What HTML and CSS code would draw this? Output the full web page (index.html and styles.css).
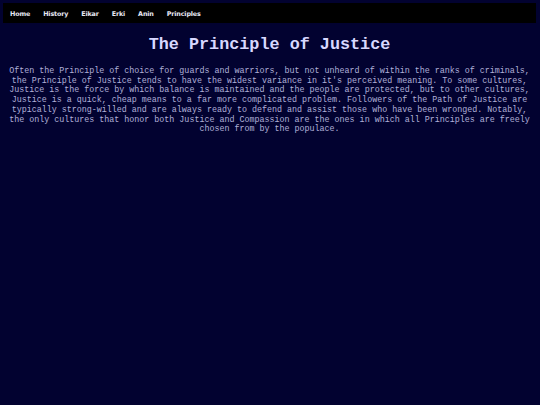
FILE: index.html
```html
<!DOCTYPE html>
<html>
<head>
<meta charset="utf-8">
<link rel="stylesheet" href="styles.css">
</head>
<body>
<nav class="nav">
  <a class="nav-link" href="#">Home</a>
  <a class="nav-link" href="#">History</a>
  <a class="nav-link" href="#">Eikar</a>
  <a class="nav-link" href="#">Erki</a>
  <a class="nav-link" href="#">Anin</a>
  <a class="nav-link" href="#">Principles</a>
</nav>
<main class="content">
  <h1 class="title">The Principle of Justice</h1>
  <p class="text">Often the Principle of choice for guards and warriors, but not unheard of within the ranks of criminals, the Principle of Justice tends to have the widest variance in it's perceived meaning. To some cultures, Justice is the force by which balance is maintained and the people are protected, but to other cultures, Justice is a quick, cheap means to a far more complicated problem. Followers of the Path of Justice are typically strong-willed and are always ready to defend and assist those who have been wronged. Notably, the only cultures that honor both Justice and Compassion are the ones in which all Principles are freely chosen from by the populace.</p>
</main>
</body>
</html>
```
FILE: styles.css
```css
html, body {
  margin: 0;
  padding: 0;
  background: #020230;
}
body {
  padding: 3px 4px 0 3px;
}
.nav {
  display: flex;
  align-items: center;
  height: 20px;
  background: #000000;
  padding-left: 7px;
  gap: 0;
}
.nav-link {
  font-family: "DejaVu Sans", sans-serif;
  font-size: 6.4px;
  font-weight: bold;
  letter-spacing: -0.15px;
  color: #e8e8f4;
  text-decoration: none;
  margin-right: 13px;
  padding-top: 1px;
}
.content {
  padding: 0 4px;
}
.title {
  font-family: "Liberation Mono", monospace;
  font-size: 16.8px;
  font-weight: bold;
  color: #d8d8ff;
  text-align: center;
  margin: 12px 0 12px;
  line-height: 20px;
}
.text {
  font-family: "Liberation Mono", monospace;
  font-size: 8.35px;
  line-height: 9.7px;
  color: #b0b0d8;
  text-align: center;
  margin: 0;
}
```
